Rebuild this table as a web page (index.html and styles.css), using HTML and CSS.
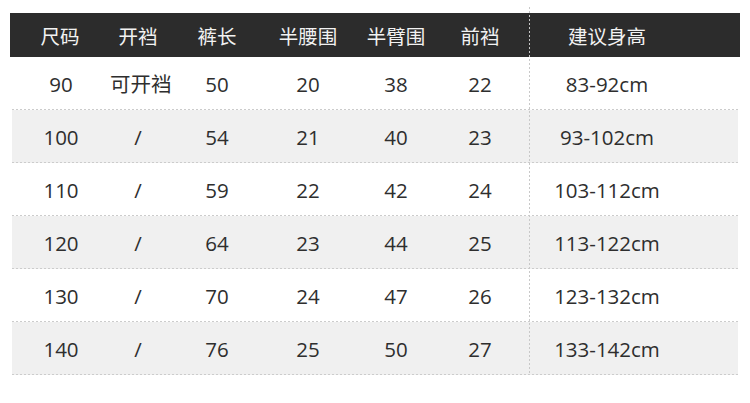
FILE: index.html
```html
<!DOCTYPE html>
<html lang="zh">
<head>
<meta charset="utf-8">
<link rel="stylesheet" href="styles.css">
</head>
<body>
<div class="page">
  <div class="table">
    <div class="head">
      <div>尺码</div><div>开裆</div><div>裤长</div><div>半腰围</div><div>半臂围</div><div>前裆</div><div>建议身高</div><div></div>
    </div>
    <div class="row">
      <div>90</div><div>可开裆</div><div>50</div><div>20</div><div>38</div><div>22</div><div>83-92cm</div><div></div>
    </div>
    <div class="row alt">
      <div>100</div><div>/</div><div>54</div><div>21</div><div>40</div><div>23</div><div>93-102cm</div><div></div>
    </div>
    <div class="row">
      <div>110</div><div>/</div><div>59</div><div>22</div><div>42</div><div>24</div><div>103-112cm</div><div></div>
    </div>
    <div class="row alt">
      <div>120</div><div>/</div><div>64</div><div>23</div><div>44</div><div>25</div><div>113-122cm</div><div></div>
    </div>
    <div class="row">
      <div>130</div><div>/</div><div>70</div><div>24</div><div>47</div><div>26</div><div>123-132cm</div><div></div>
    </div>
    <div class="row alt">
      <div>140</div><div>/</div><div>76</div><div>25</div><div>50</div><div>27</div><div>133-142cm</div><div></div>
    </div>
    <div class="vline"></div>
  </div>
</div>
</body>
</html>
```
FILE: styles.css
```css
* { box-sizing: border-box; }
html, body { margin: 0; padding: 0; background: #fff; }
body {
  font-family: "Open Sans", "Noto Sans CJK SC", sans-serif;
  font-size: 20.5px;
  color: #2e2e2e;
}
.page {
  width: 750px;
  height: 403px;
  padding: 13px 10px 0 10px;
}
.table {
  position: relative;
  width: 730px;
}
.head {
  display: grid;
  grid-template-columns: 100px 56px 102px 80px 96px 72px 182px 42px;
  height: 44px;
  background: #2c2c2c;
  color: #f2f2f2;
  font-size: 19.5px;
  align-items: center;
  text-align: center;
}
.head div { padding-top: 1px; white-space: nowrap; }
.row {
  display: grid;
  grid-template-columns: 98px 56px 102px 80px 96px 72px 182px 40px;
  margin: 0 2px;
  height: 53px;
  align-items: center;
  text-align: center;
  background-image: linear-gradient(to right, #cccccc 50%, transparent 50%);
  background-size: 4px 1px;
  background-position: left bottom;
  background-repeat: repeat-x;
  padding-bottom: 1px;
}
.row div { padding-top: 2px; line-height: 24px; white-space: nowrap; }
.row.alt { background-color: #f0f0f0; }
.vline {
  position: absolute;
  left: 519px;
  top: -6px;
  width: 1px;
  height: 368px;
  background-image: linear-gradient(to bottom, #c8c8c8 50%, transparent 50%);
  background-size: 1px 4px;
  background-repeat: repeat-y;
}
```
